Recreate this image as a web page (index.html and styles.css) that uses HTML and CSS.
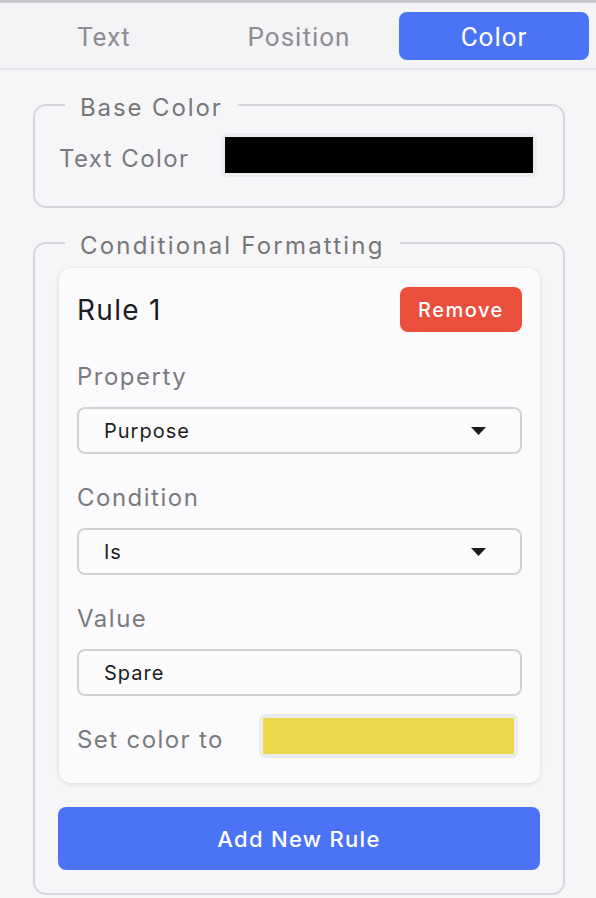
FILE: index.html
```html
<!DOCTYPE html>
<html>
<head>
<meta charset="utf-8">
<link rel="stylesheet" href="styles.css">
</head>
<body>
<div class="panel">
  <div class="tabs">
    <div class="tab tab-text">Text</div>
    <div class="tab">Position</div>
    <div class="tab active">Color</div>
  </div>

  <fieldset class="group base">
    <legend>Base Color</legend>
    <div class="color-row">
      <span class="row-label">Text Color</span>
      <span class="swatch swatch-base"><span class="swatch-fill black"></span></span>
    </div>
  </fieldset>

  <fieldset class="group cond">
    <legend class="legend-wide">Conditional Formatting</legend>
    <div class="card">
      <div class="card-head">
        <span class="rule-title">Rule 1</span>
        <button class="btn-remove">Remove</button>
      </div>
      <div class="field">
        <div class="field-label">Property</div>
        <div class="select">
          <span>Purpose</span>
          <svg class="caret" width="15" height="8" viewBox="0 0 15 8"><path d="M0 0H15L7.5 8Z" fill="#1c1c1e"/></svg>
        </div>
      </div>
      <div class="field">
        <div class="field-label">Condition</div>
        <div class="select">
          <span>Is</span>
          <svg class="caret" width="15" height="8" viewBox="0 0 15 8"><path d="M0 0H15L7.5 8Z" fill="#1c1c1e"/></svg>
        </div>
      </div>
      <div class="field">
        <div class="field-label">Value</div>
        <div class="select text-input"><span>Spare</span></div>
      </div>
      <div class="color-row set-row">
        <span class="row-label">Set color to</span>
        <span class="swatch swatch-rule"><span class="swatch-fill yellow"></span></span>
      </div>
    </div>
    <button class="btn-add">Add New Rule</button>
  </fieldset>
</div>
</body>
</html>
```

FILE: styles.css
```css
* { box-sizing: border-box; }
html, body {
  margin: 0;
  padding: 0;
  background: #f6f6f8;
}
body {
  font-family: Inter, "Noto Sans", "Liberation Sans", sans-serif;
  width: 596px;
  height: 898px;
  overflow: hidden;
}
.panel {
  border-top: 3px solid #c7c7cc;
}
.tabs {
  display: flex;
  gap: 5px;
  padding: 9px 7px 8px 9px;
  background: #f4f4f6;
  border-bottom: 2px solid #e5e5ea;
}
.tab {
  flex: 1;
  height: 48px;
  display: flex;
  align-items: center;
  justify-content: center;
  padding-top: 2px;
  font-family: Roboto, "Liberation Sans", sans-serif;
  font-size: 26px;
  letter-spacing: 1px;
  color: #8e8e93;
  border-radius: 8px;
}
.tab.active {
  background: #4a74f5;
  color: #ffffff;
}
.group {
  margin: 18px 31px 0 33px;
  border: 2px solid #d6d6db;
  border-radius: 13px;
  padding: 11px 24px 29px 24px;
  min-width: 0;
}
.group legend {
  font-size: 24px;
  line-height: 28px;
  letter-spacing: 1.9px;
  color: #767679;
  padding: 6px 15px 0 15px;
  margin-left: 6px;
}
.group .legend-wide {
  letter-spacing: 2.2px;
}
.color-row {
  display: flex;
  align-items: center;
}
.row-label {
  font-size: 24px;
  line-height: 28px;
  letter-spacing: 1.4px;
  color: #7a7a7e;
  padding-top: 8px;
}
.swatch {
  display: block;
  height: 44px;
  padding: 4px;
  background: #ececf0;
  border-radius: 6px;
  margin-left: auto;
}
.swatch-base {
  width: 316px;
  margin-right: 2px;
}
.swatch-rule {
  width: 259px;
  margin-right: 4px;
}
.swatch-fill {
  display: block;
  width: 100%;
  height: 100%;
}
.black { background: #000000; }
.yellow { background: #ecd94a; }

.cond {
  padding: 8px 23px 23px 24px;
}
.card {
  background: #fbfbfd;
  border-radius: 12px;
  box-shadow: 0 1px 5px rgba(0, 0, 0, 0.12);
  padding: 19px 18px 25px 18px;
}
.card-head {
  display: flex;
  align-items: center;
  justify-content: space-between;
  height: 45px;
}
.rule-title {
  font-size: 28px;
  letter-spacing: 1.3px;
  color: #1c1c1e;
  padding-top: 1px;
}
.btn-remove {
  width: 122px;
  height: 45px;
  border: none;
  border-radius: 8px;
  background: #ea4f3d;
  color: #ffffff;
  font-family: inherit;
  font-size: 20px;
  font-weight: 500;
  letter-spacing: 1.5px;
  padding: 0;
}
.field {
  margin-top: 31px;
}
.field + .field {
  margin-top: 30px;
}
.field-label {
  font-size: 24px;
  line-height: 28px;
  letter-spacing: 1.5px;
  color: #7a7a7e;
  margin-bottom: 16px;
}
.select {
  height: 47px;
  border: 2px solid #d1d1d6;
  border-radius: 8px;
  background: #fcfcfd;
  display: flex;
  align-items: center;
  justify-content: space-between;
  padding: 0 34px 0 25px;
  font-size: 20px;
  letter-spacing: 1px;
  color: #1c1c1e;
}
.caret { display: block; }
.set-row {
  margin-top: 18px;
}
.btn-add {
  display: block;
  width: 482px;
  height: 63px;
  margin: 24px 0 0 -1px;
  border: none;
  border-radius: 8px;
  background: #4a74f5;
  color: #ffffff;
  font-family: inherit;
  font-size: 22px;
  font-weight: 500;
  letter-spacing: 1.3px;
}
```
